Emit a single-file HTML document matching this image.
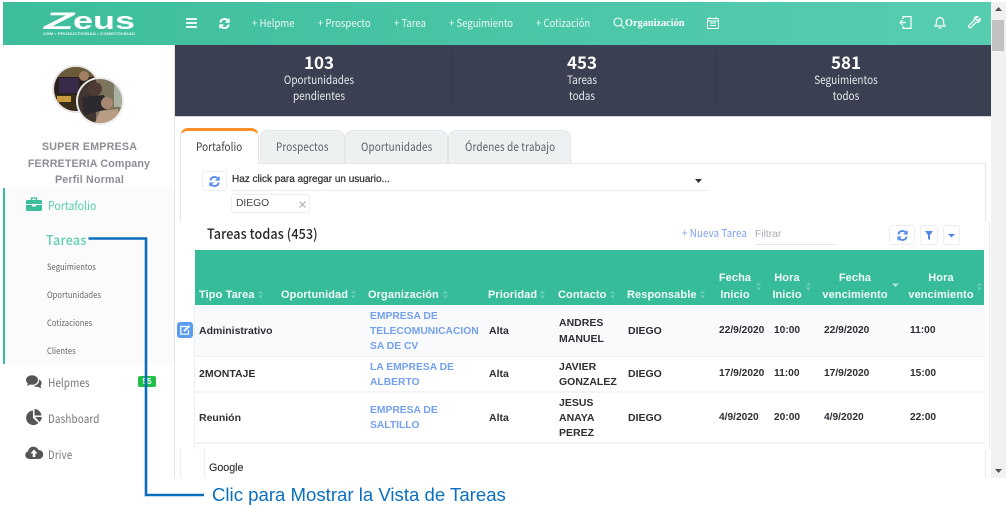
<!DOCTYPE html>
<html lang="es"><head><meta charset="utf-8"><title>Zeus</title>
<style>
html,body{margin:0;padding:0;background:#fff}
body{width:1006px;height:507px;position:relative;overflow:hidden;font-family:"Liberation Sans",sans-serif;color:#333;filter:blur(.3px)}
.b{position:absolute}
.t{position:absolute;white-space:nowrap;line-height:16px;height:16px}
.s{font-family:"Noto Sans CJK JP","Liberation Sans",sans-serif;transform-origin:left center}
.n{font-size:11px;color:#eafaf5;top:15px;transform:scaleX(.87)}
.c{transform:translateX(-50%);text-align:center}
.st{color:#e8eaf0;font-size:11.5px;transform:translateX(-50%) scaleX(.865);transform-origin:center}
.num{color:#fff;font-size:17px;font-weight:700;transform-origin:center}
.tab{position:absolute;top:130px;height:33px;background:#edf1f2;border:1px solid #e3e6e8;border-bottom:0;box-sizing:border-box;border-radius:8px 8px 0 0}
.tl{font-size:11.5px;color:#5a5f66;top:139px;transform:scaleX(.86)}
.h{font-size:11px;font-weight:700;color:#f2fbf8;letter-spacing:.1px}
.r{font-size:10.5px;font-weight:700;color:#2c2f33}
.d{font-size:10.2px;font-weight:700;color:#2c2f33}
.o{font-size:10.3px;font-weight:700;color:#74a0ee}
.sub{font-size:8.6px;color:#666;left:47px;transform:scaleX(.89)}
.si{font-size:11.5px;color:#777;left:48px;transform:scaleX(.875)}
.btn{position:absolute;background:#fff;border:1px solid #eceef0;border-radius:3px;box-sizing:border-box}
svg{position:absolute;overflow:visible}
</style></head><body>

<!-- top bar -->
<div class="b" style="left:3px;top:2px;width:988px;height:43px;background:linear-gradient(90deg,#3dbd9c,#56cdb1)"></div>
<svg style="left:42px;top:11px" width="96" height="27" viewBox="0 0 96 27">
<text x="2" y="18" font-family="Liberation Sans" font-weight="700" font-style="italic" font-size="24" fill="#fff" textLength="30" lengthAdjust="spacingAndGlyphs">Z</text>
<text x="31" y="18" font-family="Liberation Sans" font-weight="700" font-size="24" fill="#fff" textLength="62" lengthAdjust="spacingAndGlyphs">eus</text>
<text x="1" y="24" font-family="Liberation Sans" font-weight="700" font-size="3.2" fill="#e5f7f1" textLength="92" lengthAdjust="spacingAndGlyphs">CRM • PRODUCTIVIDAD • CONECTIVIDAD</text>
</svg>
<svg style="left:186px;top:18px" width="11" height="10"><path d="M0 1h11M0 5h11M0 9h11" stroke="#fff" stroke-width="1.8"/></svg>
<svg style="left:219px;top:18px" width="11" height="11" viewBox="0 0 11 11" fill="none" stroke="#fff" stroke-width="2"><path d="M1.3 4.4A4.2 4.2 0 0 1 9 3M9.700 6.600A4.200 4.200 0 0 1 2 8"/><path d="M10 .6V4H6.600M1 10.400V7h3.400" stroke-width="1.400"/></svg>
<span class="t s n" style="left:252px">+ Helpme</span>
<span class="t s n" style="left:318px">+ Prospecto</span>
<span class="t s n" style="left:394px">+ Tarea</span>
<span class="t s n" style="left:449px">+ Seguimiento</span>
<span class="t s n" style="left:536px">+ Cotización</span>
<svg style="left:613px;top:17px" width="12" height="12" fill="none" stroke="#fff" stroke-width="1.100"><circle cx="5" cy="5" r="4"/><path d="M8 8l3.500 3.500"/></svg>
<span class="t" style="left:625px;top:15.500px;font:700 10.300px/16px 'Liberation Serif',serif;color:#fff">Organización</span>
<svg style="left:707px;top:17px" width="12" height="12" fill="none" stroke="#fff" stroke-width="1"><rect x=".5" y="1.500" width="11" height="10" rx="1"/><path d="M.5 4h11M3 0v2M9 0v2M3 6h6M3 8.500h6" /></svg>
<svg style="left:899px;top:16px" width="13" height="13" fill="none" stroke="#fff" stroke-width="1.200"><path d="M4 3V.6h8v11.800H4V10M7 6.500H1M3.500 4L1 6.500 3.500 9"/></svg>
<svg style="left:934px;top:16px" width="12" height="13" fill="none" stroke="#fff" stroke-width="1.200"><path d="M1 10c1.500-1.500 1.500-2.500 1.500-5a3.500 3.500 0 0 1 7 0c0 2.500 0 3.500 1.500 5zM4.500 12h3"/></svg>
<svg style="left:968px;top:16px" width="13" height="13" fill="none" stroke="#fff" stroke-width="1.200"><path d="M12 2.500L9.800 4.700 8.300 4.200 7.800 2.700 10 .6C8 0 5.800 1.400 6.200 4.300L.8 9.700c-.800 1 .8 2.800 1.900 1.900l5.500-5.400C10.800 7 12.600 5 12 2.500z"/></svg>

<!-- scrollbar -->
<div class="b" style="left:991px;top:2px;width:15px;height:476px;background:#f1f1f1"></div>
<div class="b" style="left:992px;top:20px;width:12px;height:31px;background:#c1c1c1"></div>
<svg style="left:995px;top:7px" width="8" height="5"><path d="M0 4h7L3.500 0z" fill="#505050"/></svg>
<svg style="left:995px;top:469px" width="8" height="5"><path d="M0 0h7L3.500 4z" fill="#505050"/></svg>

<!-- dark stats -->
<div class="b" style="left:175px;top:45px;width:816px;height:71px;background:#3a3f51;border-bottom:1px solid #cdd6dd"></div>
<div class="b" style="left:451px;top:51px;width:1px;height:54px;background:#343949"></div>
<div class="b" style="left:715px;top:51px;width:1px;height:54px;background:#343949"></div>
<span class="t s num c" style="left:319px;top:54px">103</span>
<span class="t s st" style="left:319px;top:72px">Oportunidades</span>
<span class="t s st" style="left:319px;top:88px">pendientes</span>
<span class="t s num c" style="left:582px;top:54px">453</span>
<span class="t s st" style="left:582px;top:72px">Tareas</span>
<span class="t s st" style="left:582px;top:88px">todas</span>
<span class="t s num c" style="left:846px;top:54px">581</span>
<span class="t s st" style="left:846px;top:72px">Seguimientos</span>
<span class="t s st" style="left:846px;top:88px">todos</span>

<!-- sidebar -->
<div class="b" style="left:174px;top:45px;width:1px;height:433px;background:#e4e4e4"></div>
<svg style="left:54px;top:65px" width="72" height="62" viewBox="0 0 72 62">
<defs><clipPath id="c1"><circle cx="22" cy="24" r="22"/></clipPath><clipPath id="c2"><circle cx="46" cy="36" r="22"/></clipPath></defs>
<circle cx="22" cy="24" r="24" fill="#e6e6e6"/>
<g clip-path="url(#c1)"><rect width="50" height="50" x="-2" y="0" fill="#2a211b"/><rect x="-2" y="0" width="50" height="12" fill="#6b5a3a"/><rect x="5" y="13" width="20" height="15" fill="#3a2a4a"/><circle cx="30" cy="11" r="5" fill="#a08060"/><rect x="-2" y="30" width="25" height="24" fill="#3a2d18"/><rect x="3" y="31" width="14" height="6" fill="#c89a40"/></g>
<circle cx="46" cy="36" r="24" fill="#ebebeb"/>
<g clip-path="url(#c2)"><rect x="22" y="12" width="48" height="48" fill="#7d745f"/><rect x="22" y="12" width="20" height="48" fill="#40352f"/><circle cx="41" cy="24" r="7" fill="#4e3c34"/><path d="M28 32l22-2 4 14-24 6z" fill="#2c2a30"/><circle cx="53" cy="38" r="6" fill="#a88870"/><path d="M40 60l6-14 18-2 4 16z" fill="#b89c84"/><rect x="60" y="12" width="12" height="30" fill="#aab0a0"/></g>
</svg>
<span class="t c" style="left:89.500px;top:139px;font-size:10.700px;font-weight:700;color:#8b8e95;letter-spacing:.2px">SUPER EMPRESA</span>
<span class="t c" style="left:89px;top:156px;font-size:10.700px;font-weight:700;color:#8b8e95;letter-spacing:.15px">FERRETERIA Company</span>
<span class="t c" style="left:89.500px;top:172px;font-size:10.700px;font-weight:700;color:#8b8e95;letter-spacing:.2px">Perfil Normal</span>

<div class="b" style="left:3px;top:188px;width:171px;height:176px;background:#fbfbfb;border-left:2.500px solid #36bc9b;box-sizing:border-box"></div>
<svg style="left:26px;top:197px" width="16" height="14"><path d="M1.500 3h13A1.500 1.500 0 0 1 16 4.500V7H0V4.500A1.500 1.500 0 0 1 1.500 3zM0 8h6v1.500h4V8h6v4.500a1.500 1.500 0 0 1-1.500 1.500h-13A1.500 1.500 0 0 1 0 12.500z" fill="#3cbd9c"/><path d="M5.500 3V1h5v2" fill="none" stroke="#3cbd9c" stroke-width="1.300"/></svg>
<span class="t s" style="left:48px;top:198px;font-size:11.800px;color:#55cdb0;transform:scaleX(.89)">Portafolio</span>
<span class="t s" style="left:46px;top:231px;font-size:13.500px;font-weight:500;color:#5fcfb4;letter-spacing:.3px;transform:scaleX(.93)">Tareas</span>
<span class="t s sub" style="top:259px">Seguimientos</span>
<span class="t s sub" style="top:287px">Oportunidades</span>
<span class="t s sub" style="top:315px">Cotizaciones</span>
<span class="t s sub" style="top:343px">Clientes</span>

<svg style="left:26px;top:375px" width="16" height="14" fill="#555"><ellipse cx="6" cy="5" rx="6" ry="4.800"/><path d="M2 8L1 11l4-2z"/><path d="M13 4.500c2 1 3 2.500 2.500 4.500-.3 1 -.8 1.500-1 2l.8 2.500-3.500-1.800c-1.500.2-3 0-4-1 3-.2 6-2.500 5.200-6.200z"/></svg>
<span class="t s si" style="top:375px">Helpmes</span>
<div class="b" style="left:138px;top:376px;width:18px;height:11px;background:#22c04a;border-radius:2px;color:#fff;font:700 8px/11px 'Liberation Sans';text-align:center">55</div>
<svg style="left:26px;top:409px" width="16" height="16" fill="#555"><path d="M7 1.500V9l5.500 5A7.300 7.300 0 1 1 7 1.500z"/><path d="M8.500 0a7.300 7.300 0 0 1 7 6.500h-7z"/><path d="M9 8h6.800a7 7 0 0 1-2.300 5z"/></svg>
<span class="t s si" style="top:411px;letter-spacing:.15px;transform:scaleX(.86)">Dashboard</span>
<svg style="left:25px;top:446px" width="18" height="13"><path d="M4 13a4 4 0 0 1-1-7.800A5.500 5.500 0 0 1 13.500 4 4.500 4.500 0 0 1 14 13z" fill="#555"/><path d="M9 3.500L5.500 7.500h2.200V11h2.600V7.500h2.200z" fill="#fff"/></svg>
<span class="t s si" style="top:447px;letter-spacing:.3px;transform:scaleX(.83)">Drive</span>

<!-- tabs -->
<div class="b" style="left:180px;top:163px;width:806px;height:59px;border:1px solid #e6e8ea;border-bottom:0;box-sizing:border-box"></div>
<div class="b" style="left:180px;top:128px;width:79px;height:36px;background:#fff;border:1px solid #e3e6e8;border-top:3px solid #fd8f2a;border-bottom:0;border-radius:8px 8px 0 0;box-sizing:border-box"></div>
<div class="tab" style="left:260px;width:85px"></div>
<div class="tab" style="left:345px;width:103px"></div>
<div class="tab" style="left:448px;width:123px"></div>
<span class="t s tl" style="left:196px;color:#3a3d42;letter-spacing:.1px">Portafolio</span>
<span class="t s tl" style="left:276px;letter-spacing:.15px">Prospectos</span>
<span class="t s tl" style="left:361px;letter-spacing:.15px">Oportunidades</span>
<span class="t s tl" style="left:465px;letter-spacing:.15px">Órdenes de trabajo</span>

<div class="btn" style="left:202px;top:171px;width:25px;height:20px"></div>
<svg style="left:209px;top:176px" width="11" height="11" viewBox="0 0 11 11" fill="none" stroke="#4f86e8" stroke-width="1.800"><path d="M1.300 4.400A4.200 4.200 0 0 1 9 3M9.700 6.600A4.200 4.200 0 0 1 2 8"/><path d="M10 .6V4H6.600M1 10.400V7h3.400" stroke-width="1.300"/></svg>
<span class="t" style="left:232px;top:172px;font-size:10px;color:#333;-webkit-text-stroke:.25px #333">Haz click para agregar un usuario...</span>
<div class="b" style="left:231px;top:190px;width:478px;height:1px;background:#eceef0"></div>
<svg style="left:695px;top:179px" width="8" height="5"><path d="M0 0h7L3.500 4z" fill="#333"/></svg>
<div class="btn" style="left:231px;top:194px;width:79px;height:19px"></div>
<span class="t" style="left:236px;top:196px;font-size:10.300px;color:#444">DIEGO</span>
<svg style="left:299px;top:201px" width="7" height="7"><path d="M.5.500l6 6M6.500.500l-6 6" stroke="#aaa" stroke-width="1"/></svg>

<!-- table panel -->
<div class="b" style="left:180px;top:222px;width:810px;height:228px;background:#fff"></div>
<div class="b" style="left:989px;top:222px;width:1px;height:227px;background:#e8eaec"></div>
<div class="b" style="left:194px;top:305px;width:1px;height:144px;background:#eceef0"></div>
<span class="t s" style="left:207px;top:226px;font-size:14px;font-weight:500;color:#26282c;letter-spacing:.1px;transform:scaleX(.9)">Tareas todas (453)</span>
<span class="t s" style="left:682px;top:225px;font-size:11px;color:#7e9ff0;letter-spacing:.1px;transform:scaleX(.89)">+ Nueva Tarea</span>
<span class="t" style="left:755px;top:227px;font-size:10.300px;color:#a8acb4">Filtrar</span>
<div class="b" style="left:755px;top:244px;width:80px;height:1px;background:#e2e6e8"></div>
<div class="btn" style="left:889px;top:225px;width:26px;height:20px"></div>
<svg style="left:897px;top:230px" width="11" height="11" viewBox="0 0 11 11" fill="none" stroke="#4f86e8" stroke-width="1.800"><path d="M1.300 4.400A4.200 4.200 0 0 1 9 3M9.700 6.600A4.200 4.200 0 0 1 2 8"/><path d="M10 .6V4H6.600M1 10.400V7h3.400" stroke-width="1.300"/></svg>
<div class="btn" style="left:920px;top:225px;width:18px;height:20px"></div>
<svg style="left:925px;top:231px" width="9" height="9"><path d="M0 0h8L5 4v5L3 8V4z" fill="#4f86e8"/></svg>
<div class="btn" style="left:943px;top:225px;width:17px;height:20px"></div>
<svg style="left:948px;top:234px" width="7" height="4"><path d="M0 0h7L3.500 3.500z" fill="#4f86e8"/></svg>

<div class="b" style="left:195px;top:250px;width:789px;height:55px;background:#36bc9b"></div>
<div class="b" style="left:195px;top:305px;width:789px;height:51px;background:#f9fafc;border-bottom:1px solid #f0f1f3;box-sizing:content-box"></div>
<div class="b" style="left:195px;top:391px;width:789px;height:2px;background:#f3f4f5"></div>
<div class="b" style="left:195px;top:442px;width:789px;height:2px;background:#f3f4f5"></div>

<span class="t h" style="left:199px;top:286.500px">Tipo Tarea</span>
<span class="t h" style="left:281px;top:286.500px">Oportunidad</span>
<span class="t h" style="left:368px;top:286.500px">Organización</span>
<span class="t h" style="left:488px;top:286.500px">Prioridad</span>
<span class="t h" style="left:558px;top:286.500px">Contacto</span>
<span class="t h" style="left:627px;top:286.500px">Responsable</span>
<span class="t h c" style="left:735px;top:270px">Fecha</span><span class="t h c" style="left:735px;top:286.500px">Inicio</span>
<span class="t h c" style="left:787px;top:270px">Hora</span><span class="t h c" style="left:787px;top:286.500px">Inicio</span>
<span class="t h c" style="left:855px;top:270px">Fecha</span><span class="t h c" style="left:855px;top:286.500px">vencimiento</span>
<span class="t h c" style="left:941px;top:270px">Hora</span><span class="t h c" style="left:941px;top:286.500px">vencimiento</span>
<!-- sort arrows -->
<svg style="left:0;top:0" width="1006" height="507" fill="#6fd0b8">
<path d="M258 293.500h5l-2.500-3zM258 295.500h5l-2.500 3zM351 293.500h5l-2.500-3zM351 295.500h5l-2.500 3zM443 293.500h5l-2.500-3zM443 295.500h5l-2.500 3zM540 293.500h5l-2.500-3zM540 295.500h5l-2.500 3zM610 293.500h5l-2.500-3zM610 295.500h5l-2.500 3zM700 293.500h5l-2.500-3zM700 295.500h5l-2.500 3zM756 285.500h5l-2.500-3zM756 287.500h5l-2.500 3zM806 285.500h5l-2.500-3zM806 287.500h5l-2.500 3zM977 285.500h5l-2.500-3zM977 287.500h5l-2.500 3z"/>
<path d="M892 283.500h7l-3.500 3.500z" fill="#b5e6d9"/>
</svg>

<!-- rows -->
<div class="b" style="left:177px;top:322px;width:16px;height:16px;background:#5b9bf0;border-radius:3px"></div>
<svg style="left:180px;top:325px" width="11" height="10" fill="none" stroke="#fff" stroke-width="1.200"><path d="M7 1.500H.8v7.700h7.700V5"/><path d="M4 6.200L9.500.8" stroke-width="1.800"/></svg>

<span class="t r" style="left:199px;top:323px">Administrativo</span>
<span class="t o" style="left:370px;top:309px">EMPRESA DE</span>
<span class="t o" style="left:370px;top:324px">TELECOMUNICACION</span>
<span class="t o" style="left:370px;top:339px">SA DE CV</span>
<span class="t r" style="left:489px;top:323px">Alta</span>
<span class="t r" style="left:559px;top:315px">ANDRES</span>
<span class="t r" style="left:559px;top:331px">MANUEL</span>
<span class="t r" style="left:628px;top:323px">DIEGO</span>
<span class="t d" style="left:719px;top:323px">22/9/2020</span>
<span class="t d" style="left:774px;top:323px">10:00</span>
<span class="t d" style="left:824px;top:323px">22/9/2020</span>
<span class="t d" style="left:910px;top:323px">11:00</span>

<span class="t r" style="left:199px;top:366px">2MONTAJE</span>
<span class="t o" style="left:370px;top:360px">LA EMPRESA DE</span>
<span class="t o" style="left:370px;top:375px">ALBERTO</span>
<span class="t r" style="left:489px;top:366px">Alta</span>
<span class="t r" style="left:559px;top:359px">JAVIER</span>
<span class="t r" style="left:559px;top:374px">GONZALEZ</span>
<span class="t r" style="left:628px;top:366px">DIEGO</span>
<span class="t d" style="left:719px;top:366px">17/9/2020</span>
<span class="t d" style="left:774px;top:366px">11:00</span>
<span class="t d" style="left:824px;top:366px">17/9/2020</span>
<span class="t d" style="left:910px;top:366px">15:00</span>

<span class="t r" style="left:199px;top:410px">Reunión</span>
<span class="t o" style="left:370px;top:403px">EMPRESA DE</span>
<span class="t o" style="left:370px;top:418px">SALTILLO</span>
<span class="t r" style="left:489px;top:410px">Alta</span>
<span class="t r" style="left:559px;top:395px">JESUS</span>
<span class="t r" style="left:559px;top:410px">ANAYA</span>
<span class="t r" style="left:559px;top:425px">PEREZ</span>
<span class="t r" style="left:628px;top:410px">DIEGO</span>
<span class="t d" style="left:719px;top:410px">4/9/2020</span>
<span class="t d" style="left:774px;top:410px">20:00</span>
<span class="t d" style="left:824px;top:410px">4/9/2020</span>
<span class="t d" style="left:910px;top:410px">22:00</span>

<!-- bottom part -->
<div class="b" style="left:180px;top:449px;width:1px;height:29px;background:#eceef0"></div>
<div class="b" style="left:204px;top:449px;width:1px;height:29px;background:#eceef0"></div>
<div class="b" style="left:985px;top:449px;width:1px;height:29px;background:#e8eaec"></div>
<span class="t" style="left:209px;top:460px;font-size:10.700px;color:#333;-webkit-text-stroke:.15px #333">Google</span>

<!-- callout -->
<svg style="left:0;top:0" width="1006" height="507" fill="none"><path d="M88.500 238.500H146V495H204" stroke="#0a6ebd" stroke-width="2.600"/></svg>
<span class="t" style="left:212px;top:484px;height:22px;line-height:22px;font-size:18.600px;color:#0a6fbe">Clic para Mostrar la Vista de Tareas</span>
</body></html>
